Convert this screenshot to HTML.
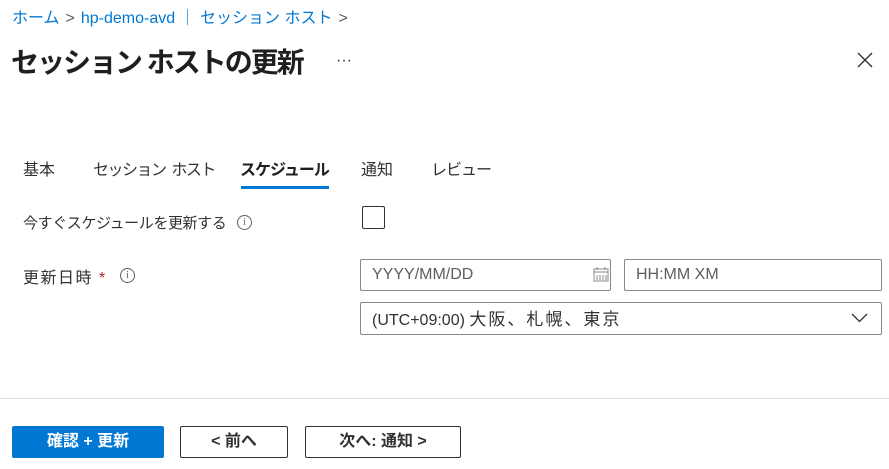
<!DOCTYPE html>
<html><head><meta charset="utf-8"><style>
body{margin:0;width:889px;height:469px;background:#fff;font-family:"Liberation Sans","Noto Sans CJK JP",sans-serif;color:#323130;position:relative;overflow:hidden}
.a{position:absolute;white-space:nowrap}
.bc{top:4px;left:12px;font-size:16px;color:#0078d4}
.bc span{color:#605e5c;margin:0 6px}
.t{top:41px;left:11px;font-size:28px;font-weight:bold;color:#201f1e;letter-spacing:-2px}
.tab{top:156px;font-size:16px;color:#323130}
.lbl{font-size:16px;color:#323130}
.info{width:13px;height:13px;border:1px solid #605e5c;border-radius:50%;font-size:10px;line-height:13px;text-align:center;color:#605e5c;font-family:"Liberation Serif",serif}
.inp{border:1px solid #8a8886;border-radius:2px;box-sizing:border-box;font-size:16px;color:#605e5c;padding-left:11px;line-height:29px}
.btn{box-sizing:border-box;top:426px;height:32px;border:1px solid #323130;border-radius:2px;font-size:16px;font-weight:bold;text-align:center;line-height:29px;color:#323130}
</style></head><body>
<div class="a bc">ホーム<span>&gt;</span>hp-demo-avd ｜ セッション ホスト<span>&gt;</span></div>
<div class="a t">セッション ホストの更新</div>
<div class="a" style="top:52px;left:336px;font-size:16px;color:#323130">···</div>
<svg class="a" style="left:857px;top:52px" width="16" height="16" viewBox="0 0 16 16"><path d="M1 1L15 15M15 1L1 15" stroke="#323130" stroke-width="1.4"/></svg>
<div class="a tab" style="left:23px">基本</div>
<div class="a tab" style="left:93px;letter-spacing:-1.5px">セッション&nbsp; ホスト</div>
<div class="a tab" style="left:240px;font-weight:bold;color:#201f1e;letter-spacing:-1px">スケジュール</div>
<div class="a" style="left:241px;top:186px;width:88px;height:3px;background:#0078d4"></div>
<div class="a tab" style="left:361px">通知</div>
<div class="a tab" style="left:431px;letter-spacing:-1px">レビュー</div>
<div class="a lbl" style="left:23px;top:212px;font-size:15px;letter-spacing:-0.4px">今すぐスケジュールを更新する</div>
<div class="a info" style="left:237px;top:215px">i</div>
<div class="a" style="left:362px;top:206px;width:23px;height:23px;box-sizing:border-box;border:1px solid #323130;border-radius:2px"></div>
<div class="a lbl" style="left:23px;top:264px;letter-spacing:1.5px">更新日時 <span style="color:#a4262c">*</span></div>
<div class="a info" style="left:120px;top:268px">i</div>
<div class="a inp" style="left:360px;top:259px;width:251px;height:32px">YYYY/MM/DD</div>
<svg class="a" style="left:593px;top:267px" width="16" height="15" viewBox="0 0 16 15"><rect x="1" y="2" width="14" height="12" fill="none" stroke="#8a8886"/><path d="M1 5H15M4 0V3M12 0V3M4 8V13M7 8V13M10 8V13M13 8V13" stroke="#8a8886"/></svg>
<div class="a inp" style="left:624px;top:259px;width:258px;height:32px">HH:MM XM</div>
<div class="a inp" style="left:360px;top:302px;width:522px;height:33px;color:#323130;line-height:33px">(UTC+09:00) <span style="font-size:17px;letter-spacing:2px">大阪、札幌、東京</span></div>
<svg class="a" style="left:851px;top:313px" width="17" height="10" viewBox="0 0 17 10"><path d="M1 1L8.5 8.5L16 1" fill="none" stroke="#323130" stroke-width="1.3"/></svg>
<div class="a" style="left:0;top:398px;width:889px;height:1px;background:#e1dfdd"></div>
<div class="a btn" style="left:12px;width:152px;background:#0078d4;border-color:#0078d4;color:#fff">確認 + 更新</div>
<div class="a btn" style="left:180px;width:108px">&lt; 前へ</div>
<div class="a btn" style="left:305px;width:156px">次へ: 通知 &gt;</div>
</body></html>
